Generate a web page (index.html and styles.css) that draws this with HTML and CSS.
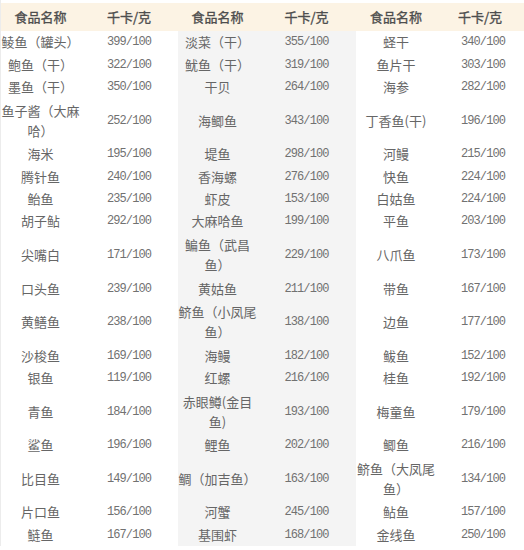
FILE: index.html
```html
<!DOCTYPE html>
<html lang="zh-CN">
<head>
<meta charset="utf-8">
<title>海产品热量表</title>
<link rel="stylesheet" href="styles.css">
</head>
<body>
<div class="table">
  <div class="row head">
    <div class="cell">食品名称</div><div class="cell">千卡/克</div>
    <div class="cell">食品名称</div><div class="cell">千卡/克</div>
    <div class="cell">食品名称</div><div class="cell">千卡/克</div>
  </div>
  <div class="row">
    <div class="cell name">鲮鱼（罐头）</div><div class="cell kcal">399/100</div>
    <div class="cell name alt">淡菜（干）</div><div class="cell kcal alt">355/100</div>
    <div class="cell name">蛏干</div><div class="cell kcal last">340/100</div>
  </div>
  <div class="row">
    <div class="cell name">鲍鱼（干）</div><div class="cell kcal">322/100</div>
    <div class="cell name alt">鱿鱼（干）</div><div class="cell kcal alt">319/100</div>
    <div class="cell name">鱼片干</div><div class="cell kcal last">303/100</div>
  </div>
  <div class="row">
    <div class="cell name">墨鱼（干）</div><div class="cell kcal">350/100</div>
    <div class="cell name alt">干贝</div><div class="cell kcal alt">264/100</div>
    <div class="cell name">海参</div><div class="cell kcal last">282/100</div>
  </div>
  <div class="row tall">
    <div class="cell name">鱼子酱（大麻哈）</div><div class="cell kcal">252/100</div>
    <div class="cell name alt">海鲫鱼</div><div class="cell kcal alt">343/100</div>
    <div class="cell name">丁香鱼(干)</div><div class="cell kcal last">196/100</div>
  </div>
  <div class="row">
    <div class="cell name">海米</div><div class="cell kcal">195/100</div>
    <div class="cell name alt">堤鱼</div><div class="cell kcal alt">298/100</div>
    <div class="cell name">河鳗</div><div class="cell kcal last">215/100</div>
  </div>
  <div class="row">
    <div class="cell name">腾针鱼</div><div class="cell kcal">240/100</div>
    <div class="cell name alt">香海螺</div><div class="cell kcal alt">276/100</div>
    <div class="cell name">快鱼</div><div class="cell kcal last">224/100</div>
  </div>
  <div class="row">
    <div class="cell name">鲐鱼</div><div class="cell kcal">235/100</div>
    <div class="cell name alt">虾皮</div><div class="cell kcal alt">153/100</div>
    <div class="cell name">白姑鱼</div><div class="cell kcal last">224/100</div>
  </div>
  <div class="row">
    <div class="cell name">胡子鲇</div><div class="cell kcal">292/100</div>
    <div class="cell name alt">大麻哈鱼</div><div class="cell kcal alt">199/100</div>
    <div class="cell name">平鱼</div><div class="cell kcal last">203/100</div>
  </div>
  <div class="row tall">
    <div class="cell name">尖嘴白</div><div class="cell kcal">171/100</div>
    <div class="cell name alt">鳊鱼（武昌鱼）</div><div class="cell kcal alt">229/100</div>
    <div class="cell name">八爪鱼</div><div class="cell kcal last">173/100</div>
  </div>
  <div class="row">
    <div class="cell name">口头鱼</div><div class="cell kcal">239/100</div>
    <div class="cell name alt">黄姑鱼</div><div class="cell kcal alt">211/100</div>
    <div class="cell name">带鱼</div><div class="cell kcal last">167/100</div>
  </div>
  <div class="row tall">
    <div class="cell name">黄鳝鱼</div><div class="cell kcal">238/100</div>
    <div class="cell name alt">鲚鱼（小凤尾鱼）</div><div class="cell kcal alt">138/100</div>
    <div class="cell name">边鱼</div><div class="cell kcal last">177/100</div>
  </div>
  <div class="row">
    <div class="cell name">沙梭鱼</div><div class="cell kcal">169/100</div>
    <div class="cell name alt">海鳗</div><div class="cell kcal alt">182/100</div>
    <div class="cell name">鲅鱼</div><div class="cell kcal last">152/100</div>
  </div>
  <div class="row">
    <div class="cell name">银鱼</div><div class="cell kcal">119/100</div>
    <div class="cell name alt">红螺</div><div class="cell kcal alt">216/100</div>
    <div class="cell name">桂鱼</div><div class="cell kcal last">192/100</div>
  </div>
  <div class="row tall">
    <div class="cell name">青鱼</div><div class="cell kcal">184/100</div>
    <div class="cell name alt">赤眼鳟(金目鱼)</div><div class="cell kcal alt">193/100</div>
    <div class="cell name">梅童鱼</div><div class="cell kcal last">179/100</div>
  </div>
  <div class="row">
    <div class="cell name">鲨鱼</div><div class="cell kcal">196/100</div>
    <div class="cell name alt">鲤鱼</div><div class="cell kcal alt">202/100</div>
    <div class="cell name">鲫鱼</div><div class="cell kcal last">216/100</div>
  </div>
  <div class="row tall">
    <div class="cell name">比目鱼</div><div class="cell kcal">149/100</div>
    <div class="cell name alt">鲷（加吉鱼）</div><div class="cell kcal alt">163/100</div>
    <div class="cell name">鲚鱼（大凤尾鱼）</div><div class="cell kcal last">134/100</div>
  </div>
  <div class="row">
    <div class="cell name">片口鱼</div><div class="cell kcal">156/100</div>
    <div class="cell name alt">河蟹</div><div class="cell kcal alt">245/100</div>
    <div class="cell name">鲇鱼</div><div class="cell kcal last">157/100</div>
  </div>
  <div class="row">
    <div class="cell name">鲢鱼</div><div class="cell kcal">167/100</div>
    <div class="cell name alt">基围虾</div><div class="cell kcal alt">168/100</div>
    <div class="cell name">金线鱼</div><div class="cell kcal last">250/100</div>
  </div>
</div>
</body>
</html>
```

FILE: styles.css
```css
html, body {
  margin: 0;
  padding: 0;
  background: #ffffff;
}

body {
  font-family: "Noto Sans CJK SC", "Noto Sans", sans-serif;
  color: #666666;
  width: 524px;
  overflow: hidden;
}

.table {
  display: flex;
  flex-direction: column;
  padding-top: 3px;
  border-left: 1px solid #ececec;
}

.row {
  display: grid;
  grid-template-columns: 79px 98px 79px 99px 80px 88px;
  height: 22.4px;
}

.row.tall {
  height: 44.8px;
}

.row.head {
  height: 28px;
  background: #fcf3e4;
}

.cell {
  display: flex;
  align-items: center;
  justify-content: center;
  text-align: center;
  font-size: 13px;
  line-height: 20px;
}

.head .cell {
  font-weight: normal;
  color: #4e4e4e;
  -webkit-text-stroke: 0.35px #4e4e4e;
}

.name {
  color: #666666;
}

.kcal {
  font-family: "Liberation Mono", monospace;
  font-size: 12px;
  letter-spacing: -0.9px;
  color: #717171;
}

.kcal.last {
  padding-left: 6px;
}

.alt {
  background: #f4f4f4;
}
```
